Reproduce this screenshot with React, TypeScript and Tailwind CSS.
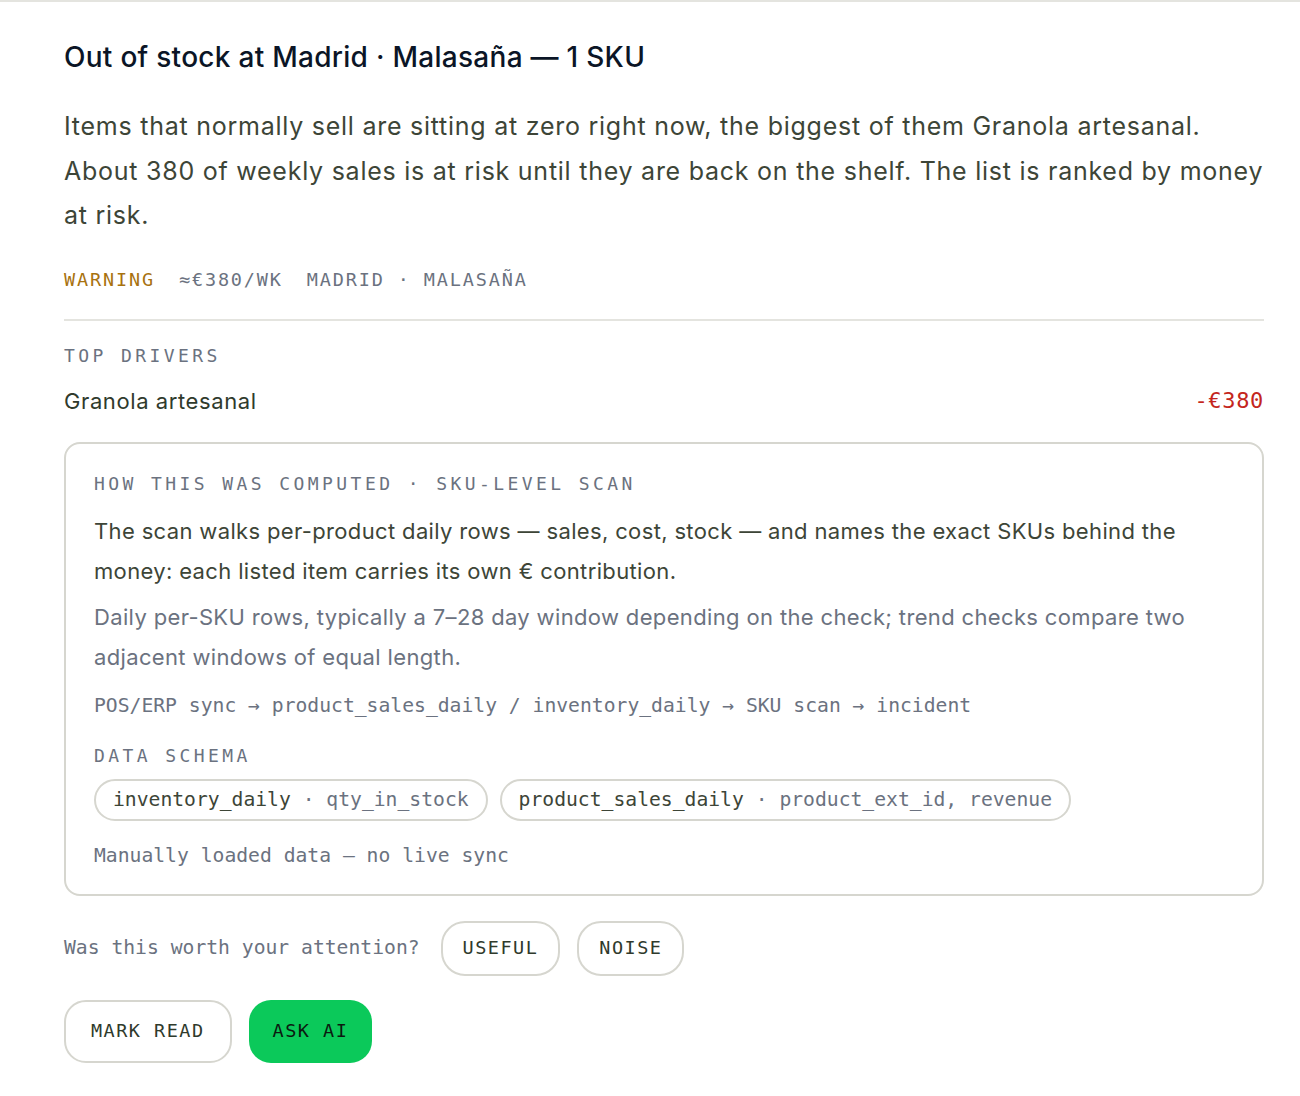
import React from "react";

const sans = "font-['Inter','Noto_Sans',sans-serif]";
const mono = "font-['DejaVu_Sans_Mono','Liberation_Mono',monospace]";

function Label({ children }: { children: React.ReactNode }) {
  return (
    <div className={`${mono} text-[18px] leading-[24px] tracking-[0.19em] uppercase text-[#6b7280]`}>
      {children}
    </div>
  );
}

function Chip({ table, cols }: { table: string; cols: string }) {
  return (
    <span
      className={`${mono} inline-flex h-[42px] items-center rounded-full border-2 border-[#d6d6cf] px-[17px] text-[19.7px] text-[#3d4537]`}
    >
      {table}
      <span className="text-[#6b7280]">&nbsp;·&nbsp;{cols}</span>
    </span>
  );
}

export default function App() {
  return (
    <div className="min-h-[1096px] w-full border-t-2 border-[#e4e4df] bg-white">
      <div className="w-[1300px] pl-16 pr-[36px] pt-[37px] pb-8">
        <h1 className={`${sans} text-[28px] font-medium leading-[36px] tracking-[0.01em] text-[#0b1526]`}>
          Out of stock at Madrid · Malasaña — 1 SKU
        </h1>

        <p className={`${sans} mt-[29px] text-[25px] leading-[44.5px] tracking-[0.03em] text-[#3d4537]`}>
          Items that normally sell are sitting at zero right now, the biggest of them Granola artesanal. About
          380 of weekly sales is at risk until they are back on the shelf. The list is ranked by money at risk.
        </p>

        <div className={`${mono} mt-[28px] flex gap-6 text-[18.5px] leading-[28px] tracking-[0.1em] uppercase`}>
          <span className="text-[#a8720f]">Warning</span>
          <span className="text-[#6b7280]">≈€380/wk</span>
          <span className="text-[#6b7280]">Madrid · Malasaña</span>
        </div>

        <div className="mt-[25px] h-[2px] bg-[#e4e4df]" />

        <div className="mt-[23px]">
          <Label>Top drivers</Label>
        </div>
        <div className="mt-[17px] flex items-center justify-between">
          <span className={`${sans} text-[22px] leading-[32px] tracking-[0.027em] text-[#2f3a2c]`}>
            Granola artesanal
          </span>
          <span className={`${mono} text-[22px] font-medium leading-[32px] tracking-[0.03em] text-[#c4261d]`}>
            -€380
          </span>
        </div>

        <div className="mt-[25px] rounded-[16px] border-2 border-[#d6d6cf] px-[28px] pt-[28px] pb-[24px]">
          <Label>How this was computed · SKU-level scan</Label>
          <p className={`${sans} mt-[15px] text-[22px] leading-[40px] tracking-[0.016em] text-[#3d4537]`}>
            The scan walks per-product daily rows — sales, cost, stock — and names the exact SKUs behind the
            money: each listed item carries its own € contribution.
          </p>
          <p className={`${sans} mt-[6px] text-[22px] leading-[40px] tracking-[0.016em] text-[#6b7280]`}>
            Daily per-SKU rows, typically a 7–28 day window depending on the check; trend checks compare two
            adjacent windows of equal length.
          </p>
          <div className={`${mono} mt-[15px] text-[19.7px] leading-[28px] text-[#6b7280]`}>
            POS/ERP sync → product_sales_daily / inventory_daily → SKU scan → incident
          </div>
          <div className="mt-[24px]">
            <Label>Data schema</Label>
          </div>
          <div className="mt-[11px] flex gap-3">
            <Chip table="inventory_daily" cols="qty_in_stock" />
            <Chip table="product_sales_daily" cols="product_ext_id, revenue" />
          </div>
          <div className={`${mono} mt-[21px] text-[19.7px] leading-[28px] text-[#6b7280]`}>
            Manually loaded data — no live sync
          </div>
        </div>

        <div className="mt-[25px] flex items-center">
          <span className={`${mono} text-[19.7px] text-[#6b7280]`}>Was this worth your attention?</span>
          <button
            className={`${mono} ml-[21px] h-[55px] rounded-[24px] border-2 border-[#d6d6cf] px-[20px] text-[18.5px] tracking-[0.08em] text-[#2f3a2c]`}
          >
            USEFUL
          </button>
          <button
            className={`${mono} ml-[17px] h-[55px] rounded-[24px] border-2 border-[#d6d6cf] px-[20px] text-[18.5px] tracking-[0.08em] text-[#2f3a2c]`}
          >
            NOISE
          </button>
        </div>

        <div className="mt-[24px] flex gap-[17px]">
          <button
            className={`${mono} h-[63px] rounded-[22px] border-2 border-[#d6d6cf] px-[25px] text-[18.5px] tracking-[0.08em] text-[#2f3a2c]`}
          >
            MARK READ
          </button>
          <button
            className={`${mono} h-[63px] rounded-[22px] bg-[#0bc95a] px-[24px] text-[18.5px] tracking-[0.08em] text-[#0b1a10]`}
          >
            ASK AI
          </button>
        </div>
      </div>
    </div>
  );
}
